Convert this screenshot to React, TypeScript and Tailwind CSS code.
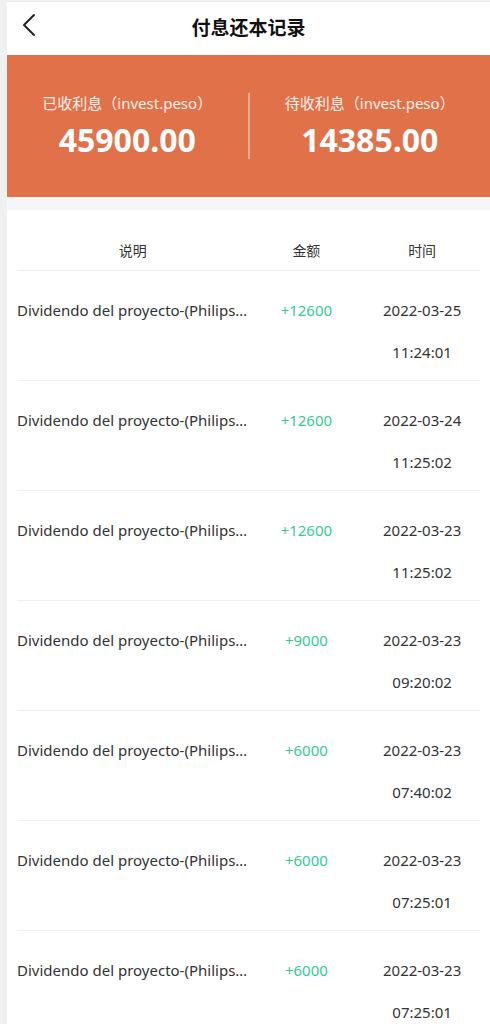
import { ChevronLeft } from "lucide-react";

const records = [
  { amount: "+12600", date: "2022-03-25", time: "11:24:01" },
  { amount: "+12600", date: "2022-03-24", time: "11:25:02" },
  { amount: "+12600", date: "2022-03-23", time: "11:25:02" },
  { amount: "+9000", date: "2022-03-23", time: "09:20:02" },
  { amount: "+6000", date: "2022-03-23", time: "07:40:02" },
  { amount: "+6000", date: "2022-03-23", time: "07:25:01" },
  { amount: "+6000", date: "2022-03-23", time: "07:25:01" },
];

export default function App() {
  return (
    <div
      className="min-h-screen bg-[#eff1f0] pl-[7px] pt-[2px] text-[#333]"
      style={{ fontFamily: '"Noto Sans", "Noto Sans CJK SC", sans-serif' }}
    >
      <div className="relative flex h-[53px] items-center justify-center bg-white">
        <ChevronLeft className="absolute left-[2px] top-[3px] h-10 w-10 text-[#222]" strokeWidth={1.2} />
        <h1 className="text-[19px] font-bold text-[#111]">付息还本记录</h1>
      </div>

      <div className="flex h-[142px] items-center bg-[#e07149] text-white">
        <div className="flex flex-1 flex-col items-center">
          <p className="text-[15px] text-white/90">已收利息（invest.peso）</p>
          <p className="mt-[6px] text-[32px] font-bold leading-[40px]">45900.00</p>
        </div>
        <div className="h-[66px] w-[2px] bg-white/40" />
        <div className="flex flex-1 flex-col items-center">
          <p className="text-[15px] text-white/90">待收利息（invest.peso）</p>
          <p className="mt-[6px] text-[32px] font-bold leading-[40px]">14385.00</p>
        </div>
      </div>

      <div className="h-[13px] bg-[#f6f6fa]" />

      <div className="bg-white px-[10px] pt-[20px]">
        <div className="grid h-[41px] grid-cols-[minmax(0,2fr)_minmax(0,1fr)_minmax(0,1fr)] items-center border-b border-[#f0f0f0] text-center text-[14px]">
          <span>说明</span>
          <span>金额</span>
          <span>时间</span>
        </div>
        {records.map((r, i) => (
          <div
            key={i}
            className="grid h-[110px] grid-cols-[minmax(0,2fr)_minmax(0,1fr)_minmax(0,1fr)] border-b border-[#f0f0f0] pt-[18px] text-[15px] leading-[42px]"
          >
            <span className="min-w-0 truncate">Dividendo del proyecto-(Philips Lighting)</span>
            <span className="text-center text-[#36c995]">{r.amount}</span>
            <span className="text-center">
              {r.date}
              <br />
              {r.time}
            </span>
          </div>
        ))}
      </div>
    </div>
  );
}
